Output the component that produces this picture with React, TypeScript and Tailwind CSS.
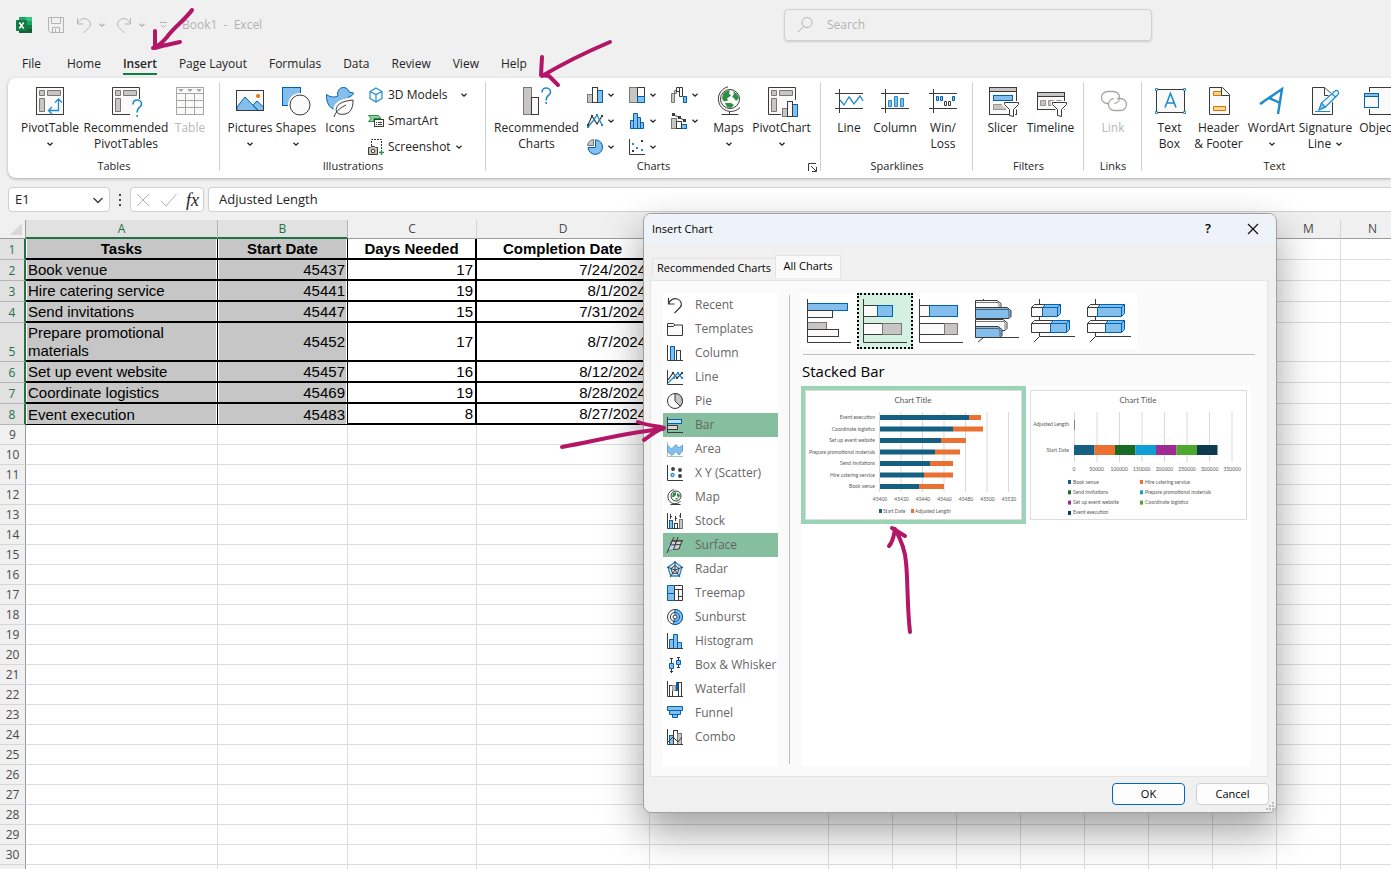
import React, { useState } from 'react';
import clsx from 'clsx';

const INK = '#3b3a39';
const GRAY = '#c8c6c4';
const BLUE = '#83beec';
const EDGE = '#0063b1';
const SKY = '#1e8bcd';

const Chevron = ({ className = '' }: { className?: string }) => (
    <svg viewBox="0 0 8 8" className={clsx('w-2 h-2', className)} fill="none" stroke="currentColor" strokeWidth="1.3">
        <path d="M1.5 2.8 4 5.2 6.5 2.8" />
    </svg>
);

/* 32px ribbon icons */
const bigIcons: Record<string, React.ReactNode> = {
    pivot: (
        <>
            <rect x="2.5" y="1.5" width="27" height="27" fill="#fafafa" stroke={INK} />
            <path d="M5.500 4.500h5v5h-5zM13.500 4.500h13v5h-13zM5.500 12.500h5v13h-5z" fill={GRAY} stroke="#797774" />
            <path d="M24.500 13v11.500H15M21 16.500l3.500-3.500 3.500 3.500M18 21l-3.500 3.500L18 28" fill="none" stroke={SKY} strokeWidth="1.300" />
        </>
    ),
    recPivot: (
        <>
            <path d="M20 28.500H2.500v-27h27V13" fill="#fafafa" stroke={INK} />
            <path d="M5.500 4.500h5v5h-5zM13.500 4.500h13v5h-13zM5.500 12.500h5v13h-5z" fill={GRAY} stroke="#797774" />
            <path d="M23 18.500c0-3 2-4.500 4.200-4.500s4.300 1.500 4.300 4c0 3.500-4.300 3.500-4.300 7.500v1M27.200 29v2" fill="none" stroke={SKY} strokeWidth="1.600" />
        </>
    ),
    table: (
        <g stroke="#a8a6a4" fill="none">
            <rect x="2.500" y="1.500" width="27" height="27" fill="#fafafa" />
            <path d="M2.500 7.500h27M2.500 14.500h27M2.500 21.500h27M11.500 7v21.500M20.500 7v21.500" />
            <path d="M5 3.500h4l-2 2zM14 3.500h4l-2 2zM23 3.500h4l-2 2z" fill="#a8a6a4" />
        </g>
    ),
    pictures: (
        <>
            <rect x="2.500" y="4.500" width="27" height="20" fill="#fafafa" stroke={INK} />
            <path d="M3 21 11 11l13 13.500H3zM19 19l4-4 6.500 6v3.500H24z" fill={BLUE} stroke={EDGE} />
            <circle cx="24" cy="10" r="2" fill="#e8700a" />
            <path d="M2.500 18v6.500h27V18" fill="none" stroke={INK} />
        </>
    ),
    shapes: (
        <>
            <rect x="2.500" y="1.500" width="18" height="18" fill={BLUE} stroke={EDGE} />
            <circle cx="20" cy="19" r="12" fill="#fff" />
            <circle cx="20" cy="19" r="10" fill="#fafafa" stroke={INK} />
        </>
    ),
    icons: (
        <>
            <path d="M2.500 8.500c4 3 8 3 11.500 1.500-1.500-4 1-8.500 5.500-8.500 3 0 5 2 5.500 4.500l4.500 1c-.5 2-2 3.500-4.500 3.500C24 17 20 23.500 13 23.500 5.500 23.500 2 16.500 2.500 8.500z" fill={BLUE} stroke={EDGE} />
            <path d="M11 26c-1-8 5-12 18.500-13 .5 10-5 17-14.500 16z" fill="#fff" stroke="#fff" strokeWidth="3" />
            <path d="M12.500 26c-2-7 5-11 16.500-12 .5 10-4.500 16-14 14z" fill="#fafafa" stroke={INK} />
            <path d="M10 31c2-6 6-9 12-12" fill="none" stroke={INK} />
        </>
    ),
    recCharts: (
        <>
            <rect x="2.500" y="1.500" width="8" height="27" fill={GRAY} stroke="#797774" />
            <rect x="10.500" y="11.500" width="7" height="17" fill="#fafafa" stroke={INK} />
            <path d="M21 6.500c0-3 2-4.500 4.200-4.500s4.300 1.500 4.300 4c0 3.500-4.300 3.500-4.300 7.500v1M25.200 16v2" fill="none" stroke={SKY} strokeWidth="1.600" />
        </>
    ),
    maps: (
        <>
            <circle cx="17" cy="13" r="9.500" fill="#fafafa" stroke={INK} />
            <path d="M10 8c2-3 5-4 7-3.500l-1 3 2 2-4 3 1 2-4 1-2-3zM20 5l4 3 2 4-3 3-2-3-2-1 2-3zM12 17h6l3 2-3 3-4-1z" fill="#2b8f45" />
            <path d="M15 .800A12.500 12.500 0 1 0 27 21.500M16.500 25.500V28M8.500 28.500h17" fill="none" stroke={INK} />
        </>
    ),
    pivotChart: (
        <>
            <path d="M16 28.500H2.500v-27h27V14" fill="#fafafa" stroke={INK} />
            <path d="M5.500 4.500h5v5h-5zM13.500 4.500h13v5h-13zM5.500 12.500h5v13h-5z" fill={GRAY} stroke="#797774" />
            <path d="M15 21h4v-6h9v2h4v15H15z" fill="#fff" />
            <rect x="16.500" y="22.500" width="5" height="8" fill={GRAY} stroke="#797774" />
            <rect x="26.500" y="18.500" width="5" height="12" fill={BLUE} stroke={EDGE} />
            <rect x="21.500" y="15.500" width="5" height="15" fill="#fafafa" stroke={INK} />
        </>
    ),
    sparkLine: (
        <>
            <path d="M2 7.500h28M2 22.500h28M6.500 3v24" fill="none" stroke={INK} />
            <path d="m7 14 4 5 5-8 5 7 6-8 3 5" fill="none" stroke={SKY} strokeWidth="1.300" />
        </>
    ),
    sparkColumn: (
        <>
            <path d="M2 7.500h28M2 22.500h28M6.500 3v24" fill="none" stroke={INK} />
            <path d="M9.500 14.500h3v6h-3zM15.500 10.500h3v10h-3zM21.500 12.500h3v8h-3z" fill={BLUE} stroke={SKY} />
        </>
    ),
    winLoss: (
        <>
            <path d="M2 7.500h28M2 22.500h28M6.500 3v24" fill="none" stroke={INK} />
            <path d="M9.500 10.500h2v4h-2zM13.500 10.500h2v4h-2zM25.500 10.500h2v4h-2z" fill={BLUE} stroke={EDGE} />
            <path d="M17.500 15.500h2v4h-2zM21.500 15.500h2v4h-2z" fill="#fafafa" stroke={INK} />
        </>
    ),
    slicer: (
        <>
            <rect x="2.500" y="1.500" width="27" height="27" fill="#fafafa" stroke={INK} />
            <rect x="2.500" y="1.500" width="27" height="4" fill={GRAY} stroke={INK} />
            <rect x="6.500" y="9.500" width="19" height="5" fill={BLUE} stroke={EDGE} />
            <rect x="6.500" y="18.500" width="12" height="5" fill={GRAY} stroke="#979593" />
            <path d="M15 15h18v5l-5 5v7h-6v-7l-7-6z" fill="#fff" />
            <path d="M17.500 16.500h14v2l-5 5v7l-4-1v-6l-5-5z" fill="#fafafa" stroke={INK} />
        </>
    ),
    timeline: (
        <>
            <rect x="2.500" y="6.500" width="27" height="17" fill="#fafafa" stroke={INK} />
            <rect x="2.500" y="6.500" width="27" height="4" fill={GRAY} stroke={INK} />
            <path d="M5.500 14.500h5v5h-5zM13.500 14.500h5v5h-5zM21.500 14.500h5v5h-5z" fill={GRAY} stroke="#979593" />
            <path d="M16 15h17v5l-5 5v7h-6v-7l-6-6z" fill="#fff" />
            <path d="M17.500 16.500h14v2l-5 5v7l-4-1v-6l-5-5z" fill="#fafafa" stroke={INK} />
        </>
    ),
    link: (
        <g fill="none" stroke="#a8a6a4" strokeWidth="1.300">
            <path d="M12 17.500h-1.500a6 6 0 0 1 0-12h6a6 6 0 0 1 6 6 6 6 0 0 1-5 6" />
            <path d="M20 12.500h3.500a6 6 0 0 1 0 12h-6a6 6 0 0 1-6-6 6 6 0 0 1 5-6" />
        </g>
    ),
    textBox: (
        <>
            <rect x="2.500" y="3.500" width="28" height="23" fill="#fafafa" stroke={INK} />
            <path d="M1.500 2.500h2v2h-2zM29.500 2.500h2v2h-2zM1.500 25.500h2v2h-2zM29.500 25.500h2v2h-2z" fill="#fff" stroke={SKY} />
            <path d="m11 21.500 5.500-14 5.500 14M13 17h7" fill="none" stroke={SKY} strokeWidth="1.600" />
        </>
    ),
    header: (
        <>
            <path d="M6.500 1.500h13l7 7v20h-20z" fill="#fafafa" stroke={INK} />
            <path d="M10.500 5.500h8v4h-8zM10.500 20.500h12v4h-12z" fill="#fbd78c" stroke="#e07000" />
            <path d="M18.500 1.500v8h8" fill="#fff" stroke={INK} />
        </>
    ),
    wordArt: <path d="M4 18 26 3l-4 25M7 16.500 4 18M12 11.500l11 5" fill="none" stroke={SKY} strokeWidth="2.400" />,
    signature: (
        <>
            <path d="M22.500 14v14.500h-20v-27h12l8 7z" fill="#fafafa" stroke={INK} />
            <path d="M14.500 1.500v8h7" fill="#fff" stroke={INK} />
            <path d="M8 26 11 17 24 4l6 4-14 15z" fill="#fff" />
            <path d="m9 24 2.500-7L25 5c2-2 5 1 3 3.500L15 21.500zM11.500 17l3.500 4M22 8l4 3.500" fill="#eef6fd" stroke={SKY} strokeWidth="1.200" />
            <path d="m9 24 2.500-7 3.500 4z" fill={BLUE} stroke={SKY} />
            <path d="M5 25.500h15" stroke={SKY} />
        </>
    ),
    object: (
        <>
            <rect x="7.500" y="1.500" width="23" height="27" fill="#fafafa" stroke={INK} />
            <rect x="1" y="6" width="18" height="17" fill="#fff" />
            <rect x="2.500" y="7.500" width="14" height="14" fill="#fafafa" stroke={EDGE} />
            <rect x="2.500" y="7.500" width="14" height="3" fill={BLUE} stroke={EDGE} />
        </>
    ),
};

/* 16px icons, ribbon and category list */
const smallIcons: Record<string, React.ReactNode> = {
    models: (
        <path d="M8 1 14 4.500v7L8 15l-6-3.500v-7zM2 4.500l6 3 6-3M8 7.500V15" fill="#fafafa" stroke={SKY} strokeWidth="1.200" />
    ),
    smartArt: (
        <>
            <path d="M.500 2.500h10l2.500 3H6v3H.500L3 5.500z" fill="#8fd19e" stroke="#2b8f45" />
            <rect x="6.500" y="6.500" width="9" height="7" fill="#fafafa" stroke={INK} />
            <path d="M8 9.500h1M10 9.500h4M8 11.500h1M10 11.500h4" stroke={INK} />
        </>
    ),
    screenshot: (
        <>
            <path d="M3.500 7V.500h10V11" fill="none" stroke={INK} strokeDasharray="2 1" />
            <path d="M.500 8.500h2l1-1h3l1 1h2v7h-9z" fill={GRAY} stroke={INK} />
            <circle cx="5" cy="12" r="1.800" fill="#fafafa" stroke={INK} />
            <path d="M13.500 11v5M11 13.500h5" stroke="#2b8f45" strokeWidth="1.300" />
        </>
    ),
    rColumn: (
        <>
            <rect x=".500" y="7.500" width="5" height="8" fill={GRAY} stroke="#797774" />
            <rect x="10.500" y="3.500" width="5" height="12" fill={BLUE} stroke={EDGE} />
            <rect x="5.500" y=".500" width="5" height="15" fill="#fafafa" stroke={INK} />
        </>
    ),
    rLine: (
        <>
            <path d="m1 12 4-9 5 8 5-8" fill="none" stroke={INK} strokeWidth="1.200" />
            <path d="m1 14 5-6 4-6 5 10" fill="none" stroke={SKY} strokeWidth="1.300" />
            <path d="M0 11h2v2H0zM4 2h2v2H4zM14 2h2v2h-2z" fill={INK} />
            <path d="M0 13h2v2H0zM9 1h2v2H9zM14 11h2v2h-2z" fill={SKY} />
        </>
    ),
    rPie: (
        <>
            <path d="M8.500.800v7.700H1A7.300 7.300 0 1 0 8.500.800z" fill={BLUE} stroke={EDGE} />
            <path d="M6.500.500v6h-6a6.500 6.500 0 0 1 6-6z" fill={GRAY} stroke="#797774" />
        </>
    ),
    rTree: (
        <>
            <rect x=".500" y=".500" width="8" height="15" fill={GRAY} stroke="#797774" />
            <rect x="8.500" y=".500" width="7" height="9" fill="#fafafa" stroke={INK} />
            <rect x="8.500" y="9.500" width="7" height="6" fill={BLUE} stroke={EDGE} />
        </>
    ),
    rHist: <path d="M1.500 7.500h3v8h-3zM4.500.500h4v15h-4zM8.500 4.500h3v11h-3zM11.500 9.500h3v6h-3z" fill={BLUE} stroke={EDGE} />,
    rScatter: (
        <>
            <path d="M.500 0v15.500H16" fill="none" stroke={INK} />
            <path d="M12 1h2v2h-2zM3 11h2v2H3z" fill={INK} />
            <path d="M3 4h2v2H3zM7 8h2v2H7zM12 10h2v2h-2z" fill={SKY} />
        </>
    ),
    rWater: (
        <>
            <path d="M.500 6.500h3v9h-3zM3.500 3.500h2v3h-2z" fill={GRAY} stroke="#797774" />
            <path d="M5.500.500h3v4h-3zM8.500.500h3v9h-3z" fill="#fafafa" stroke={INK} />
            <rect x="12.500" y="9.500" width="3" height="6" fill={BLUE} stroke={EDGE} />
        </>
    ),
    rCombo: (
        <>
            <rect x=".500" y="5.500" width="5" height="10" fill={GRAY} stroke="#797774" />
            <rect x="10.500" y="11.500" width="5" height="4" fill={BLUE} stroke={EDGE} />
            <rect x="5.500" y="8.500" width="5" height="7" fill="#fafafa" stroke={INK} />
            <path d="m2 1.500 6 3 6 3" fill="none" stroke={INK} />
            <path d="M1 0h3v3H1zM7 3h3v3H7zM12 6h3v3h-3z" fill={INK} />
        </>
    ),
    recent: <path d="M1.500 1v6h6M1.500 7C3 2.500 7 .800 10.500 2c4 1.500 5 6 2.500 8.500L7.500 16" fill="none" stroke={INK} strokeWidth="1.200" />,
    templates: <path d="M.500 14.500V2.500h6l1.500 1.500h7.500v10.500zM.500 5.500H6L8 4" fill="#fafafa" stroke={INK} />,
    column: (
        <>
            <rect x="3.500" y="1.500" width="4" height="14" fill={BLUE} stroke={EDGE} />
            <rect x="9.500" y="5.500" width="4" height="10" fill="#fafafa" stroke={INK} />
            <path d="M.500 0v15.500H16" fill="none" stroke={INK} />
        </>
    ),
    line: (
        <>
            <path d="M.500 1v14.500H16" fill="none" stroke={INK} />
            <path d="m1 11 5-7 4 5 5-5" fill="none" stroke={INK} strokeWidth="1.200" />
            <path d="m1 14 6-6 4-4 4 5" fill="none" stroke={SKY} strokeWidth="1.300" />
            <path d="M5 3h2v2H5zM9 8h2v2H9zM14 3h2v2h-2z" fill={INK} />
            <path d="M6 8h2v2H6zM10 3h2v2h-2zM14 8h2v2h-2z" fill={SKY} />
        </>
    ),
    pie: (
        <>
            <circle cx="8" cy="8" r="7.500" fill="#fafafa" stroke={INK} />
            <path d="M8 .500A7.500 7.500 0 0 1 13.300 13.300L8 8z" fill={GRAY} stroke={INK} />
        </>
    ),
    bar: (
        <>
            <rect x=".500" y="2.500" width="14" height="4" fill="#c3e0f7" stroke={EDGE} />
            <rect x=".500" y="8.500" width="10" height="4" fill="#d8d8d8" stroke={INK} />
            <path d="M.500 0v15.500H16" fill="none" stroke={INK} />
        </>
    ),
    area: (
        <>
            <path d="M.500 1v14.500H16" fill="none" stroke="#b9b7b5" />
            <path d="m.500 4 4 4L9 3.500l3 3.500 3.500-3v6L12 14l-3-3.500-4 4-4.500-4z" fill={BLUE} stroke="#5fa8dc" />
        </>
    ),
    scatter: (
        <>
            <path d="M.500 0v15.500H16" fill="none" stroke={INK} />
            <circle cx="6" cy="4" r="1.900" fill={INK} />
            <circle cx="13" cy="5" r="1.900" fill={INK} />
            <circle cx="13" cy="11" r="1.900" fill={INK} />
            <circle cx="5.500" cy="10" r="1.500" fill="#fff" stroke={SKY} strokeWidth="1.300" />
        </>
    ),
    map: (
        <>
            <circle cx="9" cy="7" r="5" fill="#fafafa" stroke={INK} />
            <path d="m6 4 3-1v3L7 8H5zM10 4l3 2-1 3-2-2zM8 9h3l-1 2z" fill="#2b8f45" />
            <path d="M7 .800A7 7 0 1 0 13.500 12M8.500 14v1M3.500 15.500h10" fill="none" stroke={INK} />
        </>
    ),
    stock: (
        <>
            <path d="M.500 0v15.500H16" fill="none" stroke={INK} />
            <rect x="2.500" y="7.500" width="3" height="8" fill={BLUE} stroke={EDGE} />
            <rect x="7.500" y="10.500" width="3" height="5" fill="#fafafa" stroke={INK} />
            <rect x="12.500" y="6.500" width="3" height="9" fill={GRAY} stroke="#797774" />
            <path d="M3.500 1v5M3.500 3.500H5M8.500 3v5M8.500 5.500H10M13.500 0v5M13.500 3H12" fill="none" stroke={INK} />
        </>
    ),
    surface: (
        <>
            <path d="m5 4 10-.500-3 8.500-11 1z" fill="#d5d2d8" stroke={INK} />
            <path d="m2 8 6-.500-1.500 5L1 13z" fill="#b5dcf5" />
            <path d="M9.500 4 6.500 12.500M3.500 8 14 7.500M7 0 5 4 0 16M11 0 8 8M5 4h11" fill="none" stroke={INK} />
        </>
    ),
    radar: (
        <>
            <path d="m8 1 7 5.300L12.300 15H3.700L1 6.300z" fill="#d6eafa" stroke={SKY} strokeWidth="1.300" />
            <path d="m8 4.500 4 3-1.500 4.800h-5L4 7.500z" fill="none" stroke={INK} />
            <path d="M8 0v9M0 6l8 3 8-3M3 16l5-7 5 7" fill="none" stroke={INK} />
        </>
    ),
    treemap: (
        <>
            <path d="M.500.500h7v8h-7zM.500 8.500h7v7h-7z" fill={BLUE} stroke={EDGE} />
            <path d="M7.500.500h8v4h-8zM7.500 4.500h4v11h-4zM11.500 4.500h4v7h-4zM11.500 11.500h4v4h-4z" fill="#fafafa" stroke={INK} />
        </>
    ),
    sunburst: (
        <>
            <circle cx="8" cy="8" r="7.500" fill="#fafafa" stroke={INK} />
            <path d="M8 .500a7.500 7.500 0 1 1-2 14.700L8 8z" fill={BLUE} stroke={EDGE} />
            <path d="M8 3.400a4.600 4.600 0 1 0 0 9.200" fill="none" stroke={INK} />
            <path d="M8 3.400a4.600 4.600 0 0 1 0 9.200" fill="none" stroke={EDGE} />
            <circle cx="8" cy="8" r="2" fill="#fafafa" stroke={INK} />
        </>
    ),
    histogram: (
        <>
            <path d="M2.500 6.500h4v9h-4zM6.500 1.500h4v14h-4zM10.500 9.500h4v6h-4z" fill={BLUE} stroke={EDGE} />
            <path d="M.500 0v15.500H16" fill="none" stroke={INK} />
        </>
    ),
    box: (
        <>
            <path d="M4.500 1v15M11.500 0v11M3 1.500h3M3 14.500h3M10 .500h3M10 10.500h3" fill="none" stroke={INK} />
            <path d="M2.500 6.500h4v5h-4zM9.500 3.500h4v4h-4z" fill={BLUE} stroke={EDGE} />
        </>
    ),
    waterfall: (
        <>
            <rect x="2.500" y="4.500" width="3" height="11" fill="#fafafa" stroke={INK} />
            <rect x="5.500" y="4.500" width="3" height="5" fill={GRAY} stroke="#979593" />
            <rect x="9" y="1" width="2" height="9" fill={EDGE} />
            <rect x="11.500" y="1.500" width="3" height="14" fill="#fafafa" stroke={INK} />
            <path d="M.500 0v15.500H16" fill="none" stroke={INK} />
        </>
    ),
    funnel: <path d="M.500 1.500h15v4H.500zM2.500 5.500h11v4h-11zM5.500 9.500h5v3h-5z" fill={BLUE} stroke={EDGE} />,
    combo: (
        <>
            <rect x="2.500" y="6.500" width="4" height="9" fill={BLUE} stroke={EDGE} />
            <rect x="6.500" y="1.500" width="4" height="14" fill="#fafafa" stroke={INK} />
            <rect x="10.500" y="4.500" width="4" height="11" fill={GRAY} stroke="#797774" />
            <path d="m1 13 5-5 5 5 4-5" fill="none" stroke={INK} />
            <path d="M.500 0v15.500H16" fill="none" stroke={INK} />
        </>
    ),
};

const Icon16 = ({ name }: { name: string }) => (
    <svg viewBox="0 0 16 16" className="w-4 h-4 flex-none overflow-visible">{smallIcons[name]}</svg>
);

interface BigButtonProps {
    icon: string;
    label: string;
    second?: string;
    menu?: boolean;
    disabled?: boolean;
    width: string;
}

const BigButton = ({ icon, label, second, menu, disabled, width }: BigButtonProps) => (
    <button
        disabled={disabled}
        className={clsx('flex flex-none flex-col items-center h-[70px] whitespace-nowrap leading-4', width, disabled && 'text-[#b8b8b8]')}
    >
        <svg viewBox="0 0 32 32" className="w-8 h-8 mb-0.5 flex-none overflow-visible">{bigIcons[icon]}</svg>
        <span>{label}</span>
        {(second || menu) && (
            <span className="flex h-4 items-center gap-1">
                {second}
                {menu && <Chevron />}
            </span>
        )}
    </button>
);

interface GroupProps {
    label: string;
    width: string;
    launcher?: boolean;
    children: React.ReactNode;
}

const RibbonGroup = ({ label, width, launcher, children }: GroupProps) => (
    <section className={clsx('relative flex flex-none flex-col after:absolute after:right-0 after:top-1 after:h-[89px] after:w-px after:bg-[#d1d1d1]', width)}>
        <div className="flex flex-1 justify-center pt-2">{children}</div>
        <div className="h-5 text-center leading-4 text-[11px]">{label}</div>
        {launcher && (
            <button aria-label={`${label} options`} className="absolute bottom-1.5 right-1">
                <svg viewBox="0 0 9 9" className="w-[9px] h-[9px]" fill="none" stroke={INK}>
                    <path d="M.500 8V.500H8M3 3l5 5M8.500 4v4.500H4" />
                </svg>
            </button>
        )}
    </section>
);

const chartMenus = [
    ['Column chart', 'rColumn'], ['Hierarchy chart', 'rTree'], ['Waterfall chart', 'rWater'],
    ['Line chart', 'rLine'], ['Statistic chart', 'rHist'], ['Combo chart', 'rCombo'],
    ['Pie chart', 'rPie'], ['Scatter chart', 'rScatter'],
];

const Ribbon = () => (
    <div className="ml-2 flex h-[100px] flex-none overflow-hidden rounded-l-lg bg-white text-xs shadow-[0_1px_3px_rgba(0,0,0,0.3)]">
        <RibbonGroup label="Tables" width="w-[212px]">
            <BigButton icon="pivot" label="PivotTable" menu width="w-16" />
            <BigButton icon="recPivot" label="Recommended" second="PivotTables" width="w-[88px]" />
            <BigButton icon="table" label="Table" disabled width="w-10" />
        </RibbonGroup>
        <RibbonGroup label="Illustrations" width="w-[266px]">
            <BigButton icon="pictures" label="Pictures" menu width="w-12" />
            <BigButton icon="shapes" label="Shapes" menu width="w-11" />
            <BigButton icon="icons" label="Icons" width="w-11" />
            <div className="ml-1.5 flex w-28 flex-col gap-2.5 pt-px">
                <button className="flex items-center gap-1 leading-4"><Icon16 name="models" />3D Models<Chevron className="ml-auto mr-3" /></button>
                <button className="flex items-center gap-1 leading-4"><Icon16 name="smartArt" />SmartArt</button>
                <button className="flex items-center gap-1 leading-4"><Icon16 name="screenshot" />Screenshot<Chevron /></button>
            </div>
        </RibbonGroup>
        <RibbonGroup label="Charts" width="w-[335px]" launcher>
            <BigButton icon="recCharts" label="Recommended" second="Charts" width="w-[88px]" />
            <div className="ml-1.5 grid grid-cols-[42px_42px_38px] grid-rows-[16px_16px_16px] gap-y-2.5 pt-px">
                {chartMenus.map(([label, icon]) => (
                    <button key={icon} aria-label={label} className="flex items-center gap-1"><Icon16 name={icon} /><Chevron /></button>
                ))}
            </div>
            <BigButton icon="maps" label="Maps" menu width="w-10" />
            <BigButton icon="pivotChart" label="PivotChart" menu width="w-[66px]" />
        </RibbonGroup>
        <RibbonGroup label="Sparklines" width="w-[152px]">
            <BigButton icon="sparkLine" label="Line" width="w-11" />
            <BigButton icon="sparkColumn" label="Column" width="w-12" />
            <BigButton icon="winLoss" label="Win/" second="Loss" width="w-12" />
        </RibbonGroup>
        <RibbonGroup label="Filters" width="w-[111px]">
            <BigButton icon="slicer" label="Slicer" width="w-11" />
            <BigButton icon="timeline" label="Timeline" width="w-[52px]" />
        </RibbonGroup>
        <RibbonGroup label="Links" width="w-[58px]">
            <BigButton icon="link" label="Link" disabled width="w-11" />
        </RibbonGroup>
        <RibbonGroup label="Text" width="w-[265px]">
            <BigButton icon="textBox" label="Text" second="Box" width="w-11" />
            <BigButton icon="header" label="Header" second="& Footer" width="w-[54px]" />
            <BigButton icon="wordArt" label="WordArt" menu width="w-[52px]" />
            <BigButton icon="signature" label="Signature" second="Line" menu width="w-14" />
            <BigButton icon="object" label="Object" width="w-12" />
        </RibbonGroup>
    </div>
);

const TitleBar = () => (
    <header className="flex h-12 flex-none items-center pl-4 pt-0.5 text-xs text-[#b3b3b3]">
        <svg viewBox="0 0 16 16" className="w-4 h-4">
            <rect x="3" width="13" height="16" rx="1" fill="#21a366" />
            <path d="M9.500 0H15a1 1 0 0 1 1 1v3H9.500z" fill="#33c481" />
            <path d="M3 8h13v7a1 1 0 0 1-1 1H4a1 1 0 0 1-1-1z" fill="#185c37" />
            <path d="M9.500 8H16v4H9.500z" fill="#107c41" />
            <rect y="3" width="11" height="11" rx="1" fill="#107c41" />
            <path d="m3.300 5.500 4.400 6M7.700 5.500l-4.400 6" stroke="#fff" strokeWidth="1.500" />
        </svg>
        <button aria-label="Save" className="ml-4">
            <svg viewBox="0 0 16 16" className="w-4 h-4" fill="none" stroke="currentColor">
                <path d="M.500.500h15v15h-13l-2-2zM3.500.500v6h9v-6M4.500 15.500v-5h7v5M7.500 12v3" />
            </svg>
        </button>
        <button aria-label="Undo" className="ml-3 flex items-center gap-1.5">
            <svg viewBox="0 0 16 16" className="w-4 h-4" fill="none" stroke="currentColor">
                <path d="M1.500 1v6h6M1.500 7C3 2.500 7 .800 10.500 2c4 1.500 5 6 2.500 8.500L7.500 16" />
            </svg>
            <Chevron />
        </button>
        <button aria-label="Redo" className="ml-2.5 flex items-center gap-1.5">
            <svg viewBox="0 0 16 16" className="w-4 h-4" fill="none" stroke="currentColor">
                <path d="M14.500 1v6h-6M14.500 7C13 2.500 9 .800 5.500 2c-4 1.500-5 6-2.500 8.500L8.500 16" />
            </svg>
            <Chevron />
        </button>
        <button aria-label="Customize toolbar" className="ml-3">
            <svg viewBox="0 0 10 10" className="w-2.5 h-2.5" fill="none" stroke="currentColor"><path d="M2 2.500h7M3 5l2.500 2.500L8 5" /></svg>
        </button>
        <h1 className="ml-3.5 whitespace-pre">Book1  -  Excel</h1>
        <label className="ml-auto mr-[239px] flex h-8 w-[368px] items-center gap-3.5 rounded border border-[#d0d0d0] px-3 shadow-[0_1px_2px_rgba(0,0,0,0.15)]">
            <svg viewBox="0 0 16 16" className="w-4 h-4" fill="none" stroke="currentColor">
                <circle cx="10" cy="5.500" r="5" /><path d="M6.500 9.500 1 15" />
            </svg>
            <input type="search" aria-label="Search" placeholder="Search" className="min-w-0 flex-1 bg-transparent outline-none placeholder:text-[#b3b3b3]" />
        </label>
    </header>
);

const menuTabs = ['Home', 'Insert', 'Page Layout', 'Formulas', 'Data', 'Review', 'View', 'Help'];

const MenuTabs = () => (
    <nav className="flex h-[30px] flex-none gap-[22px] pl-[22px] text-xs">
        <button className="mr-1 h-[27px] border-b-2 border-transparent pt-1.5">File</button>
        {menuTabs.map((tab) => (
            <button key={tab} className={clsx('h-[27px] border-b-2 pt-1.5', tab === 'Insert' ? 'border-[#107c41] font-semibold' : 'border-transparent')}>{tab}</button>
        ))}
    </nav>
);

const FormulaBar = () => (
    <div className="mt-[9px] mb-2 flex h-[25px] flex-none items-stretch pl-2 text-[13px]">
        <div className="flex w-[102px] items-center rounded border border-[#d0d0d0] bg-white pl-1.5 pr-1.5">
            <input aria-label="Name box" defaultValue="E1" className="min-w-0 flex-1 bg-transparent outline-none" />
            <svg viewBox="0 0 10 10" className="w-2.5 h-2.5" fill="none" stroke={INK} strokeWidth="1.300"><path d="m.500 3 4.500 4.500L9.500 3" /></svg>
        </div>
        <div className="flex w-5 flex-col items-center justify-center gap-[3px]">
            <i className="h-0.5 w-0.5 bg-[#444]" /><i className="h-0.5 w-0.5 bg-[#444]" /><i className="h-0.5 w-0.5 bg-[#444]" />
        </div>
        <div className="flex w-[74px] items-center justify-between rounded border border-[#d0d0d0] bg-white px-1">
            <button aria-label="Cancel entry"><svg viewBox="0 0 16 14" className="w-4 h-3.5" stroke="#b3b3b3"><path d="m2 1 12 12M14 1 2 13" /></svg></button>
            <button aria-label="Enter"><svg viewBox="0 0 16 14" className="w-4 h-3.5" fill="none" stroke="#b3b3b3"><path d="m0 8 5 5L15.500 1" /></svg></button>
            <button className="font-['Liberation_Serif',serif] text-lg italic leading-5">fx</button>
        </div>
        <input aria-label="Formula" defaultValue="Adjusted Length" className="ml-1 min-w-0 flex-1 rounded-l border border-r-0 border-[#d0d0d0] bg-white pl-2.5 outline-none" />
    </div>
);

const columns = 'ABCDEFGHIJKLMNOPQRST'.split('');
const columnWidths = ['w-[192px]', 'w-[130px]', 'w-[129px]', 'w-[173px]', 'w-[179px]'];

const sheetRows = [
    ['Tasks', 'Start Date', 'Days Needed', 'Completion Date'],
    ['Book venue', '45437', '17', '7/24/2024'],
    ['Hire catering service', '45441', '19', '8/1/2024'],
    ['Send invitations', '45447', '15', '7/31/2024'],
    ['Prepare promotional materials', '45452', '17', '8/7/2024'],
    ['Set up event website', '45457', '16', '8/12/2024'],
    ['Coordinate logistics', '45469', '19', '8/28/2024'],
    ['Event execution', '45483', '8', '8/27/2024'],
];

const Sheet = () => (
    <div className="min-h-0 flex-1 overflow-hidden">
        <table className="w-px table-fixed border-separate border-spacing-0">
            <colgroup>
                <col className="w-[26px]" />
                {columns.map((c, i) => <col key={c} className={columnWidths[i] ?? 'w-16'} />)}
            </colgroup>
            <thead>
                <tr className="h-[19px] text-xs leading-4 text-[#4a4a4a]">
                    <th className="border-b border-r border-[#9b9b9b] p-0">
                        <svg viewBox="0 0 12 12" className="ml-2.5 h-3 w-3"><path d="M12 0v12H0z" fill="#d8d8d8" /></svg>
                    </th>
                    {columns.map((c, i) => (
                        <th
                            key={c}
                            scope="col"
                            className={clsx('p-0 font-normal', i < 2
                                ? 'border-b-2 border-r border-b-[#217346] border-r-[#b5b5b5] bg-[#e1e1e1] text-[#217346]'
                                : 'border-b border-r border-b-[#9b9b9b] border-r-[#d6d6d6]')}
                        >
                            {c}
                        </th>
                    ))}
                </tr>
            </thead>
            <tbody className="bg-white font-['Liberation_Sans',Arial,sans-serif] text-[15px] leading-[18px] text-black">
                {Array.from({ length: 60 }, (_, r) => {
                    const data = sheetRows[r];
                    return (
                        <tr key={r} className={!data ? 'h-5' : r === 4 ? 'h-[39px]' : 'h-[21px]'}>
                            <th
                                scope="row"
                                className={clsx("border-b p-0 align-bottom font-['Open_Sans','Noto_Sans',sans-serif] text-[12px] font-normal", data
                                    ? 'border-r-2 border-b-[#b5b5b5] border-r-[#217346] bg-[#e1e1e1] text-[#217346]'
                                    : 'border-r border-b-[#d6d6d6] border-r-[#9b9b9b] bg-[#f0f0f0] text-[#4a4a4a]')}
                            >
                                {r + 1}
                            </th>
                            {columns.map((c, i) => {
                                if (!data || i > 3) return <td key={c} className="border-b border-r border-[#dcdcdc] p-0" />;
                                const selected = i < 2;
                                return (
                                    <td
                                        key={c}
                                        className={clsx(
                                            'border-black px-0.5 pb-0',
                                            selected ? 'border-r bg-[#c6c6c6] shadow-[inset_1px_0_0_#fff,inset_-1px_0_0_#fff]' : 'border-r-2',
                                            selected && r === 7 ? 'border-b' : 'border-b-2',
                                            r === 0 ? 'pt-0 text-center font-bold' : 'pt-px',
                                            r > 0 && i > 0 && 'text-right',
                                        )}
                                    >
                                        <span className={clsx('block', r === 4 && i === 0 && 'w-40')}>{data[i]}</span>
                                    </td>
                                );
                            })}
                        </tr>
                    );
                })}
            </tbody>
        </table>
    </div>
);

const categories = [
    ['Recent', 'recent'], ['Templates', 'templates'], ['Column', 'column'], ['Line', 'line'], ['Pie', 'pie'],
    ['Bar', 'bar'], ['Area', 'area'], ['X Y (Scatter)', 'scatter'], ['Map', 'map'], ['Stock', 'stock'],
    ['Surface', 'surface'], ['Radar', 'radar'], ['Treemap', 'treemap'], ['Sunburst', 'sunburst'],
    ['Histogram', 'histogram'], ['Box & Whisker', 'box'], ['Waterfall', 'waterfall'], ['Funnel', 'funnel'], ['Combo', 'combo'],
];

// Front, top and side faces of an extruded bar made of two segments
const Bar3D = ({ y, split, end }: { y: number; split: number; end: number }) => (
    <>
        <path d={`M6.500 ${y}l3-3H${split + 3}l-3 3zM6.500 ${y}H${split}v9H6.500z`} fill="#fafafa" stroke={INK} />
        <path d={`M${split} ${y}l3-3H${end + 3}l-3 3zM${split} ${y}H${end}v9H${split}zM${end} ${y}l3-3v9l-3 3z`} fill={BLUE} stroke={EDGE} />
    </>
);

const Tube = ({ y, end, fill }: { y: number; end: number; fill: string }) => (
    <>
        <path d={`M6.500 ${y}H${end - 2}l4 3v6l-2 2H6.500z`} fill={fill} stroke={INK} />
        <path d={`M6.500 ${y + 2}H${end - 1}l1 2v6`} fill="none" stroke={INK} strokeOpacity=".7" />
    </>
);

const subtypes = [
    {
        name: 'Clustered Bar',
        art: (
            <>
                <rect x="6.500" y="10.500" width="40" height="7" fill={BLUE} stroke={EDGE} />
                <rect x="6.500" y="17.500" width="25" height="7" fill="#fafafa" stroke={INK} />
                <rect x="6.500" y="29.500" width="19" height="7" fill={GRAY} stroke="#797774" />
                <rect x="6.500" y="36.500" width="31" height="7" fill="#fafafa" stroke={INK} />
                <path d="M6.500 6v43.500H50" fill="none" stroke={INK} />
            </>
        ),
    },
    {
        name: 'Stacked Bar',
        art: (
            <>
                <path d="M6.500 12.500h14v11h-14zM6.500 30.500h19v11h-19z" fill="#fafafa" stroke={INK} />
                <rect x="20.500" y="12.500" width="15" height="11" fill={BLUE} stroke={EDGE} />
                <rect x="25.500" y="30.500" width="19" height="11" fill={GRAY} stroke="#797774" />
                <path d="M6.500 6v43.500H50" fill="none" stroke={INK} />
            </>
        ),
    },
    {
        name: '100% Stacked Bar',
        art: (
            <>
                <path d="M6.500 12.500h10v11h-10zM6.500 30.500h25v11h-25z" fill="#fafafa" stroke={INK} />
                <rect x="16.500" y="12.500" width="28" height="11" fill={BLUE} stroke={EDGE} />
                <rect x="31.500" y="30.500" width="13" height="11" fill={GRAY} stroke="#797774" />
                <path d="M6.500 6v43.500H50" fill="none" stroke={INK} />
            </>
        ),
    },
    {
        name: '3-D Clustered Bar',
        art: (
            <>
                <path d="M14.500 6v38.500H50M14.500 44.500 9 49" fill="none" stroke={INK} />
                <Tube y={7.5} end={30} fill="#fafafa" />
                <Tube y={14.5} end={40} fill={BLUE} />
                <Tube y={26.5} end={36} fill="#fafafa" />
                <Tube y={33.5} end={31} fill={BLUE} />
            </>
        ),
    },
    {
        name: '3-D Stacked Bar',
        art: (
            <>
                <path d="M14.500 6v37.500H50M14.500 43.500 9 49" fill="none" stroke={INK} />
                <Bar3D y={14.5} split={17.5} end={32.5} />
                <Bar3D y={30.5} split={25.5} end={41.5} />
            </>
        ),
    },
    {
        name: '3-D 100% Stacked Bar',
        art: (
            <>
                <path d="M14.500 6v37.500H50M14.500 43.500 9 49" fill="none" stroke={INK} />
                <Bar3D y={14.5} split={16.5} end={40.5} />
                <Bar3D y={30.5} split={24.5} end={40.5} />
            </>
        ),
    },
];

const taskBars: [string, number, number][] = [
    ['Event execution', 164, 176],
    ['Coordinate logistics', 148, 178],
    ['Set up event website', 136, 161],
    ['Prepare promotional materials', 130, 155],
    ['Send invitations', 125, 148],
    ['Hire catering service', 119, 148],
    ['Book venue', 114, 139],
];

const TasksChart = () => (
    <svg viewBox="1 1 215 128" className="block w-[217px] h-[130px] border border-[#dcdcdc] bg-white font-[Lato,sans-serif] text-[5px]" fill="#595959">
        <text x="108" y="13" textAnchor="middle" className="text-[8px]">Chart Title</text>
        {[0, 20, 40, 60, 80, 100, 120].map((v) => (
            <g key={v}>
                <path d={`M${74.5 + v * 1.075} 22v80`} stroke="#d9d9d9" />
                <text x={75 + v * 1.075} y="111" textAnchor="middle">{45400 + v}</text>
            </g>
        ))}
        {taskBars.map(([name, start, end], i) => (
            <g key={name}>
                <text x="70" y={29 + i * 11.5} textAnchor="end">{name}</text>
                <rect x="75" y={25 + i * 11.5} width={start - 75} height="5" fill="#156082" />
                <rect x={start} y={25 + i * 11.5} width={end - start} height="5" fill="#e97132" />
            </g>
        ))}
        <rect x="74" y="119" width="3" height="4" fill="#156082" />
        <text x="78" y="123">Start Date</text>
        <rect x="106" y="119" width="3" height="4" fill="#e97132" />
        <text x="110" y="123">Adjusted Length</text>
    </svg>
);

const series = [
    ['Book venue', '#156082'], ['Hire catering service', '#e97132'], ['Send invitations', '#196b24'], ['Prepare promotional materials', '#0f9ed5'],
    ['Set up event website', '#a02b93'], ['Coordinate logistics', '#4ea72e'], ['Event execution', '#0d3a4e'],
];

const SeriesChart = () => (
    <svg viewBox="1 1 215 128" className="block w-[217px] h-[130px] border border-[#dcdcdc] bg-white font-[Lato,sans-serif] text-[5px]" fill="#595959">
        <text x="108" y="13" textAnchor="middle" className="text-[8px]">Chart Title</text>
        {[0, 1, 2, 3, 4, 5, 6, 7].map((v) => (
            <g key={v}>
                <path d={`M${44.5 + v * 22.5} 22v50`} stroke="#d9d9d9" />
                <text x={44 + v * 22.6} y="81" textAnchor="middle">{v * 50000}</text>
            </g>
        ))}
        <text x="39" y="36" textAnchor="end">Adjusted Length</text>
        <text x="39" y="62" textAnchor="end">Start Date</text>
        <path d="M44.500 30v10" stroke="#6f9384" />
        {series.map(([name, color], i) => (
            <g key={name}>
                <rect x={44 + i * 20.5} y="55" width="20.500" height="10" fill={color} />
                <rect x={i % 2 ? 110 : 38} y={90 + Math.floor(i / 2) * 10.3} width="3" height="4" fill={color} />
                <text x={i % 2 ? 115 : 43} y={93.5 + Math.floor(i / 2) * 10.3}>{name}</text>
            </g>
        ))}
    </svg>
);

const InsertChartDialog = () => {
    const [category, setCategory] = useState('Bar');
    const [hovered, setHovered] = useState('Surface');
    const [subtype, setSubtype] = useState('Stacked Bar');

    return (
        <div
            role="dialog"
            aria-label="Insert Chart"
            className="absolute left-[643px] top-[213px] flex w-[634px] flex-col overflow-hidden rounded-lg border border-[#a0a0a0] bg-[#f0f0f0] text-xs text-black shadow-[0_18px_40px_rgba(0,0,0,0.38)]"
        >
            <div className="flex h-[30px] items-center bg-[#edf3f9] pl-2 pr-[17px] text-[11px]">
                <h2>Insert Chart</h2>
                <button aria-label="Help" className="ml-auto mr-9 text-[13px] font-semibold">?</button>
                <button aria-label="Close">
                    <svg viewBox="0 0 12 12" className="w-3 h-3" stroke="#111" strokeWidth="1.200"><path d="m1 1 10 10M11 1 1 11" /></svg>
                </button>
            </div>

            <div role="tablist" className="mt-[11px] flex h-[25px] items-end pl-2 pb-0.5 text-[11px]">
                <button role="tab" aria-selected={false} className="h-5 w-[123px] whitespace-nowrap border border-r-0 border-b-0 border-[#e3e3e3] bg-[#f2f2f2]">Recommended Charts</button>
                <button role="tab" aria-selected className="h-[23px] w-[66px] border border-b-0 border-[#e3e3e3] bg-[#fafafa] pb-0.5">All Charts</button>
            </div>

            <div className="mx-1.5 mr-2 flex border border-[#e3e3e3] bg-[#fafafa] pt-3 pb-2.5 pl-3">
                <ul className="w-[115px] bg-white pb-[17px]">
                    {categories.map(([name, icon]) => (
                        <li key={name}>
                            <button
                                onClick={() => setCategory(name)}
                                onMouseEnter={() => setHovered(name)}
                                className={clsx('flex h-6 w-full items-center gap-3 whitespace-nowrap pl-1 text-left text-[#666]', (name === category || name === hovered) && 'bg-[#86bf9f]')}
                            >
                                <Icon16 name={icon} />
                                {name}
                            </button>
                        </li>
                    ))}
                </ul>
                <div className="ml-[11px] mr-[11px] my-0.5 w-px bg-[#bdbdbd]" />
                <div className="flex flex-1 flex-col">
                    <div className="flex self-start bg-white">
                        {subtypes.map(({ name, art }) => (
                            <button
                                key={name}
                                aria-label={name}
                                onClick={() => setSubtype(name)}
                                className={clsx('h-14 w-14', name === subtype && 'bg-[#d3f0e0] outline-2 -outline-offset-2 outline-dotted outline-black')}
                            >
                                <svg viewBox="0 0 56 56" className="w-14 h-14">{art}</svg>
                            </button>
                        ))}
                    </div>
                    <hr className="mt-[5px] mr-3 ml-0.5 border-[#bdbdbd]" />
                    <h3 className="mt-1.5 mb-[5px] pl-px text-[15px] leading-5">{subtype}</h3>
                    <div className="mr-4 flex flex-1 items-start bg-white">
                        <button aria-label="Tasks as categories" className="border-4 border-[#9bd3b5]"><TasksChart /></button>
                        <button aria-label="Tasks as series" className="m-1"><SeriesChart /></button>
                    </div>
                </div>
            </div>

            <div className="flex justify-end gap-[11px] pt-1.5 pb-[7px] pr-[7px] text-[11px]">
                <button className="h-[22px] w-[73px] rounded border border-[#0067c0] bg-[#fdfdfd]">OK</button>
                <button className="h-[22px] w-[73px] rounded border border-[#d0d0d0] bg-[#fdfdfd]">Cancel</button>
            </div>
            <svg viewBox="0 0 8 8" className="absolute bottom-0.5 right-0.5 w-2 h-2" fill="#bdbdbd">
                <path d="M6 0h2v2H6zM3 3h2v2H3zM6 3h2v2H6zM0 6h2v2H0zM3 6h2v2H3zM6 6h2v2H6z" />
            </svg>
        </div>
    );
};

/* Hand-drawn pointers over the steps */
const Arrows = () => (
    <svg className="pointer-events-none absolute inset-0 h-full w-full" fill="none" stroke="#b31666" strokeWidth="4" strokeLinecap="round" strokeLinejoin="round">
        <path d="M192 10c-7 10-18 17-25 27-4 5-8 9-14 11M155 31v17l7-2 18-4" />
        <path d="M610 42c-26 11-46 21-68 34M542 57l-1 18 8 1 9 9" />
        <path d="M562 447c30-5 66-15 101-18M638 422c8 3 18 4 26 6-8 2-14 8-20 12" />
        <path d="M910 632c-3-26-2-50-4-70-1-14-6-24-11-33M889 546c4-4 5-11 6-17M905 536l-13-8" />
    </svg>
);

export default function App() {
    return (
        <div className="relative flex h-screen min-h-[820px] flex-col overflow-hidden bg-[#f0f0f0] font-['Open_Sans','Noto_Sans',sans-serif] text-[#242424]">
            <TitleBar />
            <MenuTabs />
            <Ribbon />
            <FormulaBar />
            <Sheet />
            <InsertChartDialog />
            <Arrows />
        </div>
    );
}
